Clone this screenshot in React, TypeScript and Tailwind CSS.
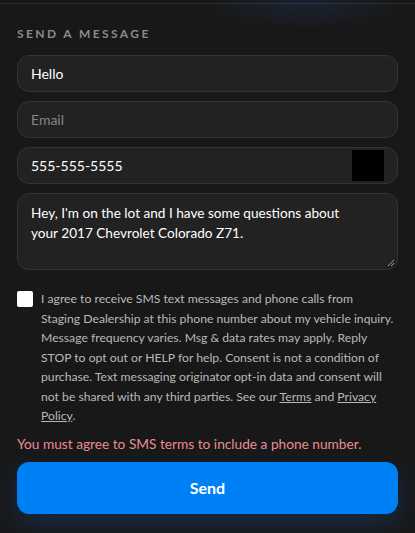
import React from "react";

const lato = { fontFamily: 'Lato, "Open Sans", sans-serif' };

export default function App() {
  return (
    <div className="relative min-h-[533px] w-full overflow-hidden bg-[#181818]" style={lato}>
      <div className="h-[4px] border-b border-[#2a2a2a] bg-[#161616]" />
      <div className="pointer-events-none absolute left-[200px] top-0 h-[30px] w-[210px] bg-[radial-gradient(ellipse_at_top,rgba(40,90,170,0.18),transparent_70%)]" />
      <div className="flex flex-col px-[17px] pt-[22px]">
        <h2 className="text-[12px] font-bold uppercase leading-[16px] tracking-[0.2em] text-[#8b8b8b]">
          Send a message
        </h2>
        <div className="mt-[13px] flex flex-col gap-[9px]">
          <div className="flex h-[37px] items-center rounded-[12px] border border-[#333333] bg-[#222222] px-[13px] text-[14px] text-white">
            Hello
          </div>
          <div className="flex h-[37px] items-center rounded-[12px] border border-[#333333] bg-[#222222] px-[13px] text-[14px] text-[#858585]">
            Email
          </div>
          <div className="flex h-[37px] items-center justify-between rounded-[12px] border border-[#333333] bg-[#222222] pl-[13px] pr-[10px] text-[14px] text-white">
            <span>555-555-5555</span>
            <div className="mr-[3px] h-[31px] w-[32px] bg-black" />
          </div>
          <div className="relative h-[77px] rounded-[12px] border border-[#333333] bg-[#222222] px-[13px] pt-[9px] text-[13.6px] leading-[20px] text-white">
            <div className="whitespace-nowrap">Hey, I'm on the lot and I have some questions about</div>
            <div className="whitespace-nowrap">your 2017 Chevrolet Colorado Z71.</div>
            <svg className="absolute bottom-[2px] right-[2px]" width="8" height="8" viewBox="0 0 8 8">
              <path d="M7 1 L1 7 M7 4 L4 7" stroke="#9a9a9a" strokeWidth="1" />
            </svg>
          </div>
        </div>
        <div className="mt-[19px] flex gap-[8px]">
          <div className="mt-[2px] h-[16px] w-[16px] shrink-0 rounded-[2px] bg-white" />
          <div className="whitespace-nowrap text-[12.2px] leading-[19.5px] text-[#b8b8b8]">
            <div>I agree to receive SMS text messages and phone calls from</div>
            <div>Staging Dealership at this phone number about my vehicle inquiry.</div>
            <div>Message frequency varies. Msg &amp; data rates may apply. Reply</div>
            <div>STOP to opt out or HELP for help. Consent is not a condition of</div>
            <div>purchase. Text messaging originator opt-in data and consent will</div>
            <div>
              not be shared with any third parties. See our <a className="underline">Terms</a> and{" "}
              <a className="underline">Privacy</a>
            </div>
            <div>
              <a className="underline">Policy</a>.
            </div>
          </div>
        </div>
        <p className="mt-[8px] whitespace-nowrap text-[13.7px] leading-[20px] text-[#ec8c97]">
          You must agree to SMS terms to include a phone number.
        </p>
        <button className="mt-[8px] h-[52px] w-full rounded-[12px] bg-[#0080f5] text-[16px] font-bold text-white shadow-[0_10px_28px_rgba(20,90,180,0.3)]">
          Send
        </button>
      </div>
    </div>
  );
}
